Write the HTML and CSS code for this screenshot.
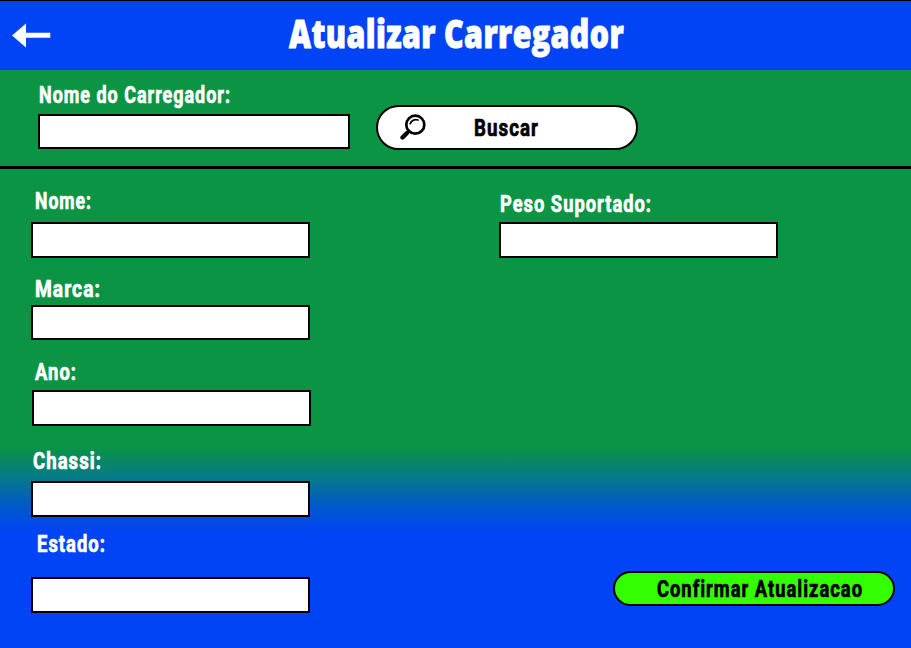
FILE: index.html
```html
<!DOCTYPE html>
<html lang="pt-BR">
<head>
<meta charset="utf-8">
<title>Atualizar Carregador</title>
<link rel="stylesheet" href="styles.css">
</head>
<body>
<header class="header">
  <a class="back" href="#" aria-label="Voltar"><svg width="39" height="25" viewBox="0 0 39 25"><path fill="#fff" d="M0 12.5 14 .4v9.3h24.3v5H14v9.8z"/></svg></a>
  <h1 class="title"><svg class="text title-text" width="335" height="44"><text x="0" y="34" textLength="335" lengthAdjust="spacingAndGlyphs">Atualizar Carregador</text></svg></h1>
</header>
<section class="search">
  <label class="search-field">
    <svg class="text label" width="192" height="24"><text x="0" y="18" textLength="192" lengthAdjust="spacingAndGlyphs">Nome do Carregador:</text></svg>
    <input class="input search-input" type="text">
  </label>
  <button class="button search-button" type="button">
    <svg class="search-icon" width="26" height="26" viewBox="0 0 26 26" fill="none" stroke="#000" stroke-linecap="round"><circle cx="15.3" cy="10.7" r="9" stroke-width="2.7"/><path stroke-width="1.8" d="M10.2 9.6c1-3 4.5-4.8 7.8-3.6"/><path stroke-width="2.6" d="m9 17-2 2"/><path stroke-width="4.4" d="m7 19-4.5 4.5"/></svg>
    <svg class="text" width="65" height="24"><text x="0" y="18" textLength="65" lengthAdjust="spacingAndGlyphs">Buscar</text></svg>
  </button>
</section>
<main class="form">
  <div class="column">
    <label class="field nome">
      <svg class="text label" width="57" height="24"><text x="0" y="18" textLength="57" lengthAdjust="spacingAndGlyphs">Nome:</text></svg>
      <input class="input" type="text">
    </label>
    <label class="field marca">
      <svg class="text label" width="66" height="24"><text x="0" y="18" textLength="66" lengthAdjust="spacingAndGlyphs">Marca:</text></svg>
      <input class="input" type="text">
    </label>
    <label class="field ano">
      <svg class="text label" width="42" height="24"><text x="0" y="18" textLength="42" lengthAdjust="spacingAndGlyphs">Ano:</text></svg>
      <input class="input" type="text">
    </label>
    <label class="field chassi">
      <svg class="text label" width="69" height="24"><text x="0" y="18" textLength="69" lengthAdjust="spacingAndGlyphs">Chassi:</text></svg>
      <input class="input" type="text">
    </label>
    <label class="field estado">
      <svg class="text label" width="69" height="24"><text x="0" y="18" textLength="69" lengthAdjust="spacingAndGlyphs">Estado:</text></svg>
      <input class="input" type="text">
    </label>
  </div>
  <div class="column side">
    <label class="field peso">
      <svg class="text label" width="152" height="24"><text x="0" y="18" textLength="152" lengthAdjust="spacingAndGlyphs">Peso Suportado:</text></svg>
      <input class="input" type="text">
    </label>
    <button class="button confirm" type="button"><svg class="text" width="206" height="24"><text x="0" y="18" textLength="206" lengthAdjust="spacingAndGlyphs">Confirmar Atualizacao</text></svg></button>
  </div>
</main>
</body>
</html>
```
FILE: styles.css
```css
* {
  box-sizing: border-box;
}

body {
  margin: 0;
  height: 648px;
  overflow: hidden;
  font-family: Roboto, "Liberation Sans", sans-serif;
  background: linear-gradient(#0a9444 446px, #057690 481px, #0058cb 507px, #0044f6 532px);
}

.text {
  display: block;
  flex: none;
  overflow: visible;
  font: 700 23.5px Roboto, "Liberation Sans", sans-serif;
  letter-spacing: 1.3px;
  fill: #000;
  stroke: #000;
  stroke-width: 0.7px;
}

.label {
  fill: #fff;
  stroke: #fff;
}

.header {
  display: flex;
  height: 70px;
  border-top: 1px solid #000;
  background: #0044f6;
}

.back {
  width: 39px;
  margin: 22px 0 0 12px;
}

.title {
  margin: 13px 0 0 238px;
}

.title-text {
  font-family: "Open Sans", Roboto, sans-serif;
  font-size: 38px;
  font-weight: 800;
  letter-spacing: 0.5px;
  fill: #fff;
  stroke: #fff;
  stroke-width: 1px;
}

.search {
  display: flex;
  height: 99px;
  padding-left: 38px;
  border-bottom: 3px solid #000;
}

.search-field {
  width: 312px;
  padding-top: 15px;
}

.search-field .label {
  margin-left: 1px;
}

.input {
  display: block;
  width: 278.5px;
  height: 36px;
  padding: 0 8px;
  border: 2px solid #000;
  border-radius: 0;
  background: #fff;
  font: 18px Roboto, sans-serif;
  outline: none;
}

.search-input {
  width: 312px;
  height: 35px;
  margin-top: 5px;
}

.button {
  display: flex;
  align-items: center;
  padding: 0;
  border: 2px solid #000;
}

.search-button {
  width: 262px;
  height: 45px;
  margin: 35px 0 0 26px;
  padding-left: 22px;
  border-radius: 23px;
  background: #fff;
}

.search-icon {
  margin-right: 48px;
  margin-top: -2px;
}

.search-button .text {
  margin-top: 4px;
}

.form {
  display: flex;
  padding-left: 31px;
}

.column {
  width: 280px;
}

.field {
  display: block;
}

.nome {
  padding-top: 22px;
}

.nome .label {
  margin: 0 0 7px 4px;
}

.marca {
  padding-top: 21px;
}

.marca .label {
  margin: 0 0 2px 4px;
}

.marca .input {
  height: 35px;
}

.ano {
  padding: 22px 0 0 1px;
}

.ano .label {
  margin: 0 0 4px 3px;
}

.chassi {
  padding-top: 25px;
}

.chassi .label {
  margin: 0 0 6px 2px;
}

.estado {
  padding-top: 17px;
}

.estado .label {
  margin: 0 0 19px 6px;
}

.side {
  width: 396px;
  margin-left: 188px;
}

.peso {
  padding-top: 25px;
}

.peso .label {
  margin: 0 0 4px 1px;
}

.confirm {
  width: 282px;
  height: 35px;
  margin: 313px 0 0 114px;
  padding-left: 42px;
  border-radius: 18px;
  background: #33ff00;
}

.confirm .text {
  margin-top: 4px;
}
```
